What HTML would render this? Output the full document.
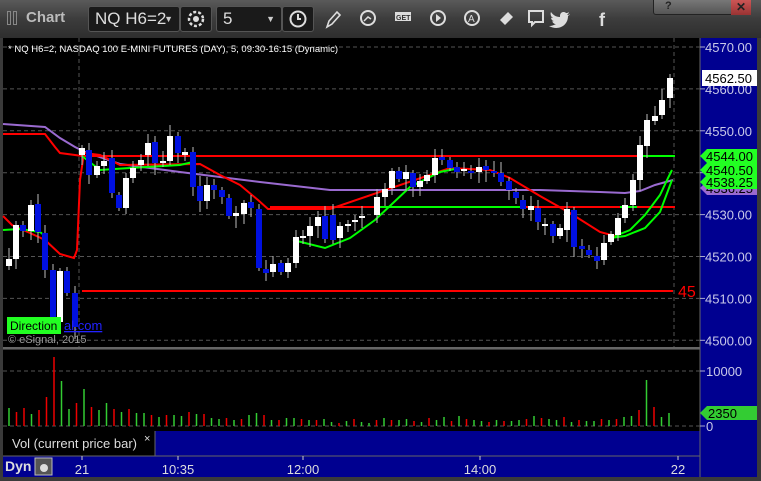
<!DOCTYPE html>
<html><head><meta charset="utf-8"><style>
*{margin:0;padding:0;box-sizing:border-box}
body{width:761px;height:481px;background:#3a3a3a;overflow:hidden;font-family:"Liberation Sans",sans-serif;position:relative}
#tb{position:absolute;left:0;top:0;width:761px;height:38px;background:linear-gradient(#5a5a5a,#3c3c3c 50%,#2e2e2e)}
.box{position:absolute;top:6px;height:26px;background:#1a1a1a;border:1px solid #555;border-radius:3px;color:#ddd;font-size:17px;line-height:24px;padding-left:6px}
#svg{position:absolute;left:0;top:0}
</style></head><body>
<div id="tb">
<div style="position:absolute;left:7px;top:11px;width:4px;height:14px;border:1px solid #888"></div>
<div style="position:absolute;left:13px;top:11px;width:4px;height:14px;border:1px solid #888"></div>
<div style="position:absolute;left:26px;top:9px;color:#bbb;font-weight:bold;font-size:15px">Chart</div>
<div class="box" style="left:88px;width:92px">NQ H6=2<span style="position:absolute;right:6px;font-size:9px;color:#ccc">▼</span></div>
<div class="box" style="left:180px;width:32px;padding:0"><svg width="30" height="24"><circle cx="15" cy="12" r="7" fill="none" stroke="#ddd" stroke-width="2.5" stroke-dasharray="3 2"/><circle cx="15" cy="12" r="3" fill="#ddd"/></svg></div>
<div class="box" style="left:216px;width:66px">5<span style="position:absolute;right:6px;font-size:9px;color:#ccc">▼</span></div>
<div class="box" style="left:282px;width:32px;padding:0"><svg width="30" height="24"><circle cx="15" cy="12" r="7.5" fill="none" stroke="#ddd" stroke-width="2"/><path d="M15 7v5h3" stroke="#ddd" stroke-width="2" fill="none"/></svg></div>
<svg style="position:absolute;left:320px;top:8px" width="440" height="24">
<path d="M7 19l2-6 8-9 3 3-8 9z" fill="none" stroke="#ddd" stroke-width="1.6"/>
<circle cx="48" cy="10" r="7" fill="none" stroke="#ddd" stroke-width="2"/><path d="M44 13l4-4 3 2" stroke="#ddd" stroke-width="1.5" fill="none"/>
<rect x="75" y="4" width="16" height="9" fill="#ddd"/><text x="76" y="12" font-size="7" font-weight="bold" fill="#333" font-family="Liberation Sans">GET</text>
<circle cx="118" cy="10" r="7" fill="none" stroke="#ddd" stroke-width="2"/><path d="M116 6v8l5-4z" fill="#ddd"/>
<circle cx="152" cy="10" r="7" fill="none" stroke="#ddd" stroke-width="2"/><text x="148" y="14" font-size="10" fill="#ddd" font-family="Liberation Sans">A</text>
<path d="M180 12l8-8 5 5-8 8z" fill="#ddd"/>
<path d="M209 3h14v11h-8l-3 3v-3h-3z" fill="none" stroke="#ddd" stroke-width="2"/>
<path d="M250 6c-1 1-2 1-3 1 1-1 2-2 2-3-1 1-2 1-3 1-2-2-6-1-6 3 0 0 0 1 0 1-4 0-7-2-9-5-1 2 0 5 2 6-1 0-2 0-2-1 0 2 1 4 3 4-1 0-2 1-2 0 1 2 2 3 4 3-2 1-4 2-7 2 9 5 19 0 19-10 1-1 2-1 2-2z" fill="#ddd"/>
<text x="279" y="18" font-size="18" font-weight="bold" fill="#ddd" font-family="Liberation Sans">f</text>
</svg>
<div style="position:absolute;left:653px;top:0;width:98px;height:15px;border:1px solid #222;border-top:0;border-radius:0 0 3px 3px;background:linear-gradient(#777,#555)"></div>
<div style="position:absolute;left:731px;top:0;width:20px;height:15px;background:linear-gradient(#c55,#933);color:#222;font-size:12px;font-weight:bold;text-align:center">✕</div>
<div style="position:absolute;left:665px;top:0;color:#222;font-size:11px;font-weight:bold">?</div>
</div>
<svg id="svg" width="761" height="481"></svg>
<script>
const S=[];
function a(s){S.push(s)}
a('<rect x="0" y="38" width="761" height="443" fill="#3a3a3a"/>');
a('<rect x="3" y="38" width="697" height="309" fill="#000"/>');
a('<rect x="700" y="38" width="57" height="439" fill="#000090"/>');
a('<rect x="3" y="350" width="697" height="81" fill="#000"/>');
a('<rect x="3" y="431" width="152" height="25" fill="#000"/>');
a('<rect x="155" y="431" width="545" height="25" fill="#000090"/>');
a('<rect x="3" y="456" width="697" height="21" fill="#000090"/>');
a('<line x1="700" y1="38" x2="700" y2="477" stroke="#666"/>');
a('<line x1="3" y1="348" x2="700" y2="348" stroke="#666" stroke-width="2"/>');
a('<line x1="3" y1="456" x2="700" y2="456" stroke="#666"/>');
a('<line x1="155" y1="431" x2="155" y2="456" stroke="#666"/>');
const Y=p=>47+(4570-p)*4.19;
for(let p=4570;p>=4500;p-=10){const y=Y(p);a(`<line x1="3" y1="${y}" x2="700" y2="${y}" stroke="#555" stroke-dasharray="4 3"/>`);a(`<line x1="700" y1="${y}" x2="705" y2="${y}" stroke="#aac"/>`);a(`<text x="705" y="${y+5}" font-size="13" fill="#c8c8e8">${p}.00</text>`)}
a('<line x1="79" y1="38" x2="79" y2="347" stroke="#555" stroke-dasharray="4 3"/>');
a('<line x1="674" y1="38" x2="674" y2="347" stroke="#555" stroke-dasharray="4 3"/>');
a('<text x="8" y="52" font-size="9.5" fill="#fff">* NQ H6=2, NASDAQ 100 E-MINI FUTURES (DAY), 5, 09:30-16:15 (Dynamic)</text>');
const pl=(pts,c,w)=>a(`<polyline points="${pts}" fill="none" stroke="${c}" stroke-width="${w||2}"/>`);
pl("3,124 45,127 60,138 75,147 85,152 120,164 180,172 260,182 330,190 420,190 540,190 600,192 625,193 640,191 655,185 673,180","#9a6ad0",2);
pl("3,134 45,134 55,147 60,153 75,155 82,156 675,156","#f00",2);
pl("637,156 675,156","#0f0",2);
pl("3,216 12,225 30,233 45,240 60,254 74,258 77,250 80,180 84,153 100,155 120,165 200,164 220,175 240,185 258,200 268,209 330,209 450,168 490,170 510,178 540,196 570,213 600,232 615,236","#f00",2);
pl("270,207 675,207","#f00",2);
pl("375,207 520,207","#0f0",2);
pl("620,207 637,207","#0f0",2);
pl("3,230 20,229 40,232 45,236","#0f0",2);
pl("82,156 100,170 130,168 180,165 193,162","#0f0",2);
pl("293,240 325,248 350,238 375,220 410,187 440,172 460,168","#0f0",2);
pl("615,236 630,230 645,215 660,195 668,178 672,170","#0f0",2);
pl("610,238 625,236 645,228 660,212 672,180","#0f0",2);
pl("82,291 673,291","#f00",2);
a('<text x="678" y="297" font-size="16" fill="#f00">45</text>');
const C=[[9,259,266,1],[16,225,259,1],[23,225,231,0],[31,205,231,1],[38,204,232,0],[45,233,270,0],[53,270,322,0],[60,271,322,1],[67,271,293,0],[75,293,327,0],[82,148,155,1],[89,150,175,0],[97,166,175,1],[104,161,166,1],[112,158,193,0],[119,195,208,0],[126,178,208,1],[133,168,178,1],[141,160,165,1],[148,143,155,1],[155,142,163,0],[163,161,163,1],[170,136,161,1],[178,136,153,0],[185,152,155,1],[193,152,187,0],[200,186,201,0],[207,185,201,1],[214,185,190,0],[222,190,197,0],[229,198,216,0],[236,213,216,1],[244,203,214,1],[251,202,208,0],[259,209,268,0],[266,269,273,0],[273,264,272,1],[281,263,272,0],[288,263,272,1],[296,237,263,1],[303,236,238,1],[310,226,236,1],[318,217,226,1],[325,216,239,0],[333,215,240,0],[340,226,238,1],[348,224,226,1],[355,220,222,1],[362,216,217,1],[377,197,215,1],[385,189,197,1],[392,171,188,1],[399,171,179,0],[406,172,179,1],[413,173,187,0],[420,181,187,1],[427,175,181,1],[435,158,175,1],[442,157,160,0],[450,160,168,0],[457,167,172,0],[464,169,171,1],[471,171,173,0],[479,167,172,1],[486,166,170,0],[494,171,173,0],[501,173,182,0],[509,181,190,0],[516,192,198,0],[523,200,209,0],[531,206,210,1],[538,208,222,0],[545,224,226,1],[553,224,236,0],[560,228,236,1],[567,209,230,1],[574,210,247,0],[582,246,249,0],[589,250,255,0],[597,256,261,0],[604,243,260,1],[611,234,242,1],[618,218,235,1],[625,205,218,1],[633,180,205,1],[640,145,180,1],[647,120,146,1],[655,116,121,1],[662,100,115,1],[670,78,98,1]];
let r=7;C.forEach((c,i)=>{r=(r*37+11)%23;const t=c[1]-3-r%9,b=c[2]+3+(r*3)%10;
a(`<line x1="${c[0]}" y1="${t}" x2="${c[0]}" y2="${b}" stroke="#bbb"/>`);
a(`<rect x="${c[0]-3}" y="${c[1]}" width="6" height="${Math.max(2,c[2]-c[1])}" fill="${c[3]?'#fff':'#0010e0'}"/>`);});
const tag=(y,t,bg,fg)=>a(`<path d="M700 ${y} L707 ${y-7} H757 V${y+7} H707 Z" fill="${bg}"/><text x="706" y="${y+5}" font-size="13" fill="${fg}">${t}</text>`);
tag(188,'4536.25','#9a6ad0','#000');tag(182,'4538.25','#2f2','#000');tag(170,'4540.50','#2f2','#000');tag(156,'4544.00','#2f2','#000');
a('<rect x="702" y="70" width="55" height="16" fill="#fff"/><text x="705" y="83" font-size="13" fill="#000">4562.50</text>');
a('<rect x="7" y="317" width="54" height="17" fill="#2f2"/><text x="10" y="330" font-size="12" fill="#000">Direction</text><text x="64" y="330" font-size="13" fill="#22f" text-decoration="underline">al.com</text>');
a('<text x="8" y="343" font-size="11" fill="#999">© eSignal, 2015</text>');
const vb=426;
a(`<line x1="3" y1="${vb}" x2="700" y2="${vb}" stroke="#555" stroke-dasharray="4 3"/><line x1="3" y1="371" x2="700" y2="371" stroke="#555" stroke-dasharray="4 3"/>`);
[[371,'10000'],[426,'0']].forEach(v=>a(`<line x1="700" y1="${v[0]}" x2="705" y2="${v[0]}" stroke="#aac"/><text x="706" y="${v[0]+5}" font-size="13" fill="#c8c8e8">${v[1]}</text>`));
const VH=[18,14,18,12,16,29,69,45,17,23,37,19,16,23,17,14,17,13,13,11,9,11,11,10,14,12,12,8,7,8,6,7,11,13,11,6,6,8,8,7,6,6,7,4,3,5,7,4,3,6,8,6,6,7,5,4,8,6,9,5,10,7,6,5,4,6,5,5,6,7,10,8,7,6,9,4,6,5,5,7,6,7,9,10,16,46,19,9,13];
VH.forEach((h,i)=>{const x=9+i*7.5;if(x>672)return;const c=(i*7+3)%5<2||[1,2,4,5,9,11,14].includes(i)?'#e00':'#3c3';a(`<line x1="${x}" y1="${vb}" x2="${x}" y2="${vb-h}" stroke="${c}" stroke-width="1.5"/>`)});
a('<path d="M700 413 L707 406 H757 V420 H707 Z" fill="#3c3"/><text x="708" y="418" font-size="13" fill="#000">2350</text>');
a('<text x="12" y="448" font-size="13" fill="#ddd">Vol (current price bar)</text><text x="144" y="442" font-size="11" fill="#ddd">×</text>');
[[82,'21'],[178,'10:35'],[303,'12:00'],[480,'14:00'],[678,'22']].forEach(t=>a(`<line x1="${t[0]}" y1="456" x2="${t[0]}" y2="460" stroke="#ccc"/><text x="${t[0]}" y="474" font-size="13" fill="#ddd" text-anchor="middle">${t[1]}</text>`));
a('<text x="5" y="471" font-size="14" font-weight="bold" fill="#ddd">Dyn</text><rect x="35" y="458" width="17" height="17" fill="#555" stroke="#bbb"/><circle cx="44" cy="468" r="4" fill="#ddd"/>');
document.getElementById('svg').innerHTML=S.join('');
</script>
</body></html>
